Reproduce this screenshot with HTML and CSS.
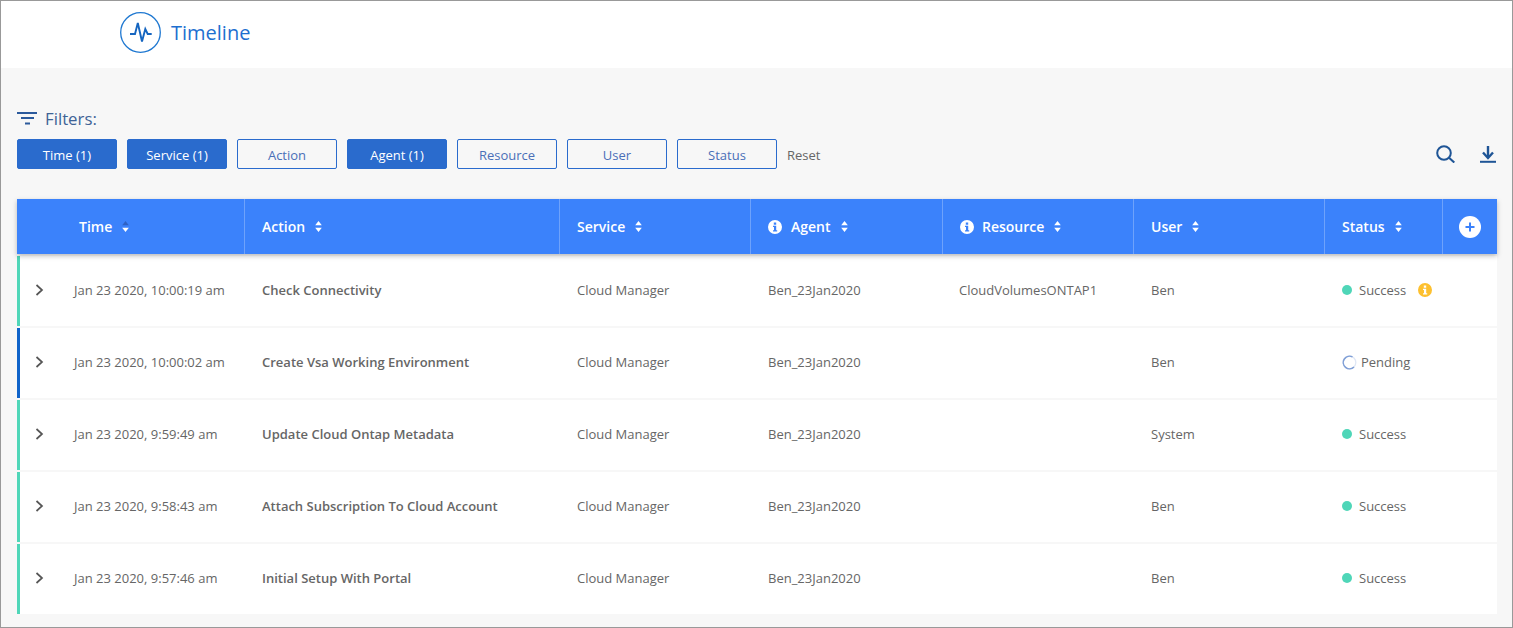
FILE: index.html
```html
<!DOCTYPE html>
<html lang="en">
<head>
    <meta charset="UTF-8">
    <title>Timeline</title>
    <link rel="stylesheet" href="styles.css">
</head>
<body>
    <svg class="sprites" width="0" height="0">
        <symbol id="sort" viewBox="0 0 7 11"><path d="M3.500 0 6.800 4.300H0.200Z M3.500 11 6.800 6.700H0.200Z"/></symbol>
        <symbol id="sort-asc" viewBox="0 0 7 11"><path fill="#2f62c4" d="M3.500 0 6.800 4.300H0.200Z"/><path fill="#fff" d="M3.500 11 6.800 6.700H0.200Z"/></symbol>
        <symbol id="info" viewBox="0 0 14 14"><path fill-rule="evenodd" d="M7 0a7 7 0 1 0 0 14A7 7 0 0 0 7 0ZM5.800 2.600h2.400v2.100H5.800ZM5 5.800h3.200v4.400h1v1.300H5v-1.300h1V7.100H5Z"/></symbol>
        <symbol id="chevron" viewBox="0 0 9 12"><path d="M1.500 1 7 6 1.500 11" fill="none" stroke="currentColor" stroke-width="1.700"/></symbol>
    </svg>

    <div class="page">
        <header class="top">
            <svg class="logo" width="41" height="41" viewBox="0 0 41 41">
                <circle cx="20.500" cy="20.500" r="19.800" fill="none" stroke="#1f78d1" stroke-width="1.300"/>
                <path d="M10 22h5l2.800-11 4.200 18.500 3.300-12.500 2.400 5h4" fill="none" stroke="#1565c0" stroke-width="1.900"/>
            </svg>
            <h1>Timeline</h1>
        </header>

        <section class="filters">
            <div class="filters-label">
                <svg width="20" height="13" viewBox="0 0 20 13">
                    <path d="M0 1h20M4 6h13M8 11.500h5" stroke="#2c5a9c" stroke-width="2"/>
                </svg>
                <span>Filters:</span>
            </div>
            <div class="filters-row">
                <button class="chip active">Time (1)</button>
                <button class="chip active">Service (1)</button>
                <button class="chip">Action</button>
                <button class="chip active">Agent (1)</button>
                <button class="chip">Resource</button>
                <button class="chip">User</button>
                <button class="chip">Status</button>
                <span class="reset">Reset</span>
                <div class="tools">
                    <svg width="19" height="18" viewBox="0 0 19 18">
                        <circle cx="8" cy="8" r="6.800" fill="none" stroke="#1f5596" stroke-width="2"/>
                        <path d="M12.800 12.600 18.300 17.600" stroke="#1f5596" stroke-width="2"/>
                    </svg>
                    <svg width="16" height="17" viewBox="0 0 16 17">
                        <path d="M8 0V11" stroke="#1f5596" stroke-width="2.400"/>
                        <path d="M3 6.500 8 12l5-5.500" fill="none" stroke="#1f5596" stroke-width="2.400"/>
                        <path d="M0 15.800h16" stroke="#1f5596" stroke-width="2"/>
                    </svg>
                </div>
            </div>
        </section>

        <section class="table">
            <div class="thead">
                <div class="th th-time">Time <svg class="sort"><use href="#sort-asc"/></svg></div>
                <div class="th">Action <svg class="sort"><use href="#sort"/></svg></div>
                <div class="th">Service <svg class="sort"><use href="#sort"/></svg></div>
                <div class="th"><svg class="info"><use href="#info"/></svg> Agent <svg class="sort"><use href="#sort"/></svg></div>
                <div class="th"><svg class="info info-tight"><use href="#info"/></svg> Resource <svg class="sort"><use href="#sort"/></svg></div>
                <div class="th">User <svg class="sort"><use href="#sort"/></svg></div>
                <div class="th">Status <svg class="sort"><use href="#sort"/></svg></div>
                <div class="th th-add">
                    <svg width="22" height="22" viewBox="0 0 22 22">
                        <circle cx="11" cy="11" r="11" fill="#fff"/>
                        <path d="M11 6.500v9M6.500 11h9" stroke="#3b82fb" stroke-width="2"/>
                    </svg>
                </div>
            </div>

            <div class="row">
                <div class="td td-time ok"><svg class="chevron"><use href="#chevron"/></svg>Jan 23 2020, 10:00:19 am</div>
                <div class="td action">Check Connectivity</div>
                <div class="td">Cloud Manager</div>
                <div class="td">Ben_23Jan2020</div>
                <div class="td td-resource">CloudVolumesONTAP1</div>
                <div class="td">Ben</div>
                <div class="td status"><i class="dot"></i>Success<svg class="warn"><use href="#info"/></svg></div>
            </div>
            <div class="row">
                <div class="td td-time pending"><svg class="chevron"><use href="#chevron"/></svg>Jan 23 2020, 10:00:02 am</div>
                <div class="td action">Create Vsa Working Environment</div>
                <div class="td">Cloud Manager</div>
                <div class="td">Ben_23Jan2020</div>
                <div class="td"></div>
                <div class="td">Ben</div>
                <div class="td status">
                    <svg class="spinner" width="15" height="15" viewBox="0 0 15 15">
                        <circle cx="7.500" cy="7.500" r="6.300" fill="none" stroke="#dfe7f5" stroke-width="1.300"/>
                        <path d="M10.500 1.900A6.300 6.300 0 1 0 12 12" fill="none" stroke="#7f9fd6" stroke-width="1.500"/>
                    </svg>Pending
                </div>
            </div>
            <div class="row">
                <div class="td td-time ok"><svg class="chevron"><use href="#chevron"/></svg>Jan 23 2020, 9:59:49 am</div>
                <div class="td action">Update Cloud Ontap Metadata</div>
                <div class="td">Cloud Manager</div>
                <div class="td">Ben_23Jan2020</div>
                <div class="td"></div>
                <div class="td">System</div>
                <div class="td status"><i class="dot"></i>Success</div>
            </div>
            <div class="row">
                <div class="td td-time ok"><svg class="chevron"><use href="#chevron"/></svg>Jan 23 2020, 9:58:43 am</div>
                <div class="td action">Attach Subscription To Cloud Account</div>
                <div class="td">Cloud Manager</div>
                <div class="td">Ben_23Jan2020</div>
                <div class="td"></div>
                <div class="td">Ben</div>
                <div class="td status"><i class="dot"></i>Success</div>
            </div>
            <div class="row">
                <div class="td td-time ok"><svg class="chevron"><use href="#chevron"/></svg>Jan 23 2020, 9:57:46 am</div>
                <div class="td action">Initial Setup With Portal</div>
                <div class="td">Cloud Manager</div>
                <div class="td">Ben_23Jan2020</div>
                <div class="td"></div>
                <div class="td">Ben</div>
                <div class="td status"><i class="dot"></i>Success</div>
            </div>
        </section>
    </div>
</body>
</html>
```

FILE: styles.css
```css
* {
    box-sizing: border-box;
}

body {
    margin: 0;
    font-family: "Open Sans", sans-serif;
    font-size: 13px;
    color: #666;
}

.sprites {
    display: block;
    height: 0;
}

.page {
    height: 628px;
    background-color: #f7f7f7;
    border: 1px solid #999;
}

.top {
    display: flex;
    align-items: center;
    height: 67px;
    padding: 0 0 5px 119px;
    background-color: #fff;
}

.top h1 {
    margin: 0 0 0 10px;
    font-size: 20px;
    font-weight: 400;
    color: #1e6fd0;
}

.filters {
    padding: 40px 16px 0;
}

.filters-label {
    display: flex;
    align-items: center;
    gap: 8px;
    height: 20px;
    font-size: 16.800px;
    color: #3e6396;
}

.filters-row {
    display: flex;
    align-items: center;
    gap: 10px;
    margin-top: 11px;
}

.chip {
    width: 100px;
    height: 30px;
    padding: 2px 0 0;
    font-family: inherit;
    font-size: 13px;
    color: #4a6fb8;
    background-color: transparent;
    border: 1px solid #2a6bcd;
    border-radius: 2px;
}

.chip.active {
    color: #fff;
    background-color: #2a6bcd;
}

.reset {
    padding-top: 2px;
    color: #666;
}

.tools {
    display: flex;
    align-items: center;
    gap: 25px;
    margin-left: auto;
}

.table {
    margin: 30px 15px 0 16px;
}

.thead,
.row {
    display: grid;
    grid-template-columns: 227px 315px 191px 192px 191px 191px 118px 55px;
}

.thead {
    position: relative;
    height: 55px;
    background-color: #3b82fb;
    box-shadow: 0 2px 5px rgba(0, 0, 0, 0.25);
}

.th {
    display: flex;
    align-items: center;
    padding-left: 17px;
    font-size: 14px;
    font-weight: 600;
    color: #fff;
    border-left: 1px solid #6ea2fb;
}

.th-time {
    padding-left: 62px;
    border-left: none;
}

.th-add {
    justify-content: center;
    padding-left: 0;
}

.sort {
    width: 7px;
    height: 11px;
    margin-left: 10px;
    fill: #fff;
}

.info {
    width: 14px;
    height: 14px;
    margin-right: 9px;
    fill: #fff;
}

.info-tight {
    margin-right: 8px;
}

.row {
    height: 70px;
    margin-top: 2px;
    background-color: #fff;
}

.row:first-of-type {
    margin-top: 1px;
}

.td {
    display: flex;
    align-items: center;
    padding: 0 0 2px 18px;
}

.td-resource {
    padding-left: 17px;
}

.td-time {
    padding-left: 15px;
    border-left: 3px solid;
}

.td-time.ok {
    border-left-color: #4fd6b8;
}

.td-time.pending {
    border-left-color: #0f63c9;
}

.chevron {
    width: 9px;
    height: 12px;
    margin-right: 30px;
    color: #555;
}

.action {
    font-weight: 600;
}

.dot {
    width: 10px;
    height: 10px;
    margin-right: 7px;
    background-color: #4fd6b8;
    border-radius: 50%;
}

.warn {
    width: 14px;
    height: 14px;
    margin-left: 12px;
    fill: #fdc02f;
}

.spinner {
    margin-right: 4px;
}
```
